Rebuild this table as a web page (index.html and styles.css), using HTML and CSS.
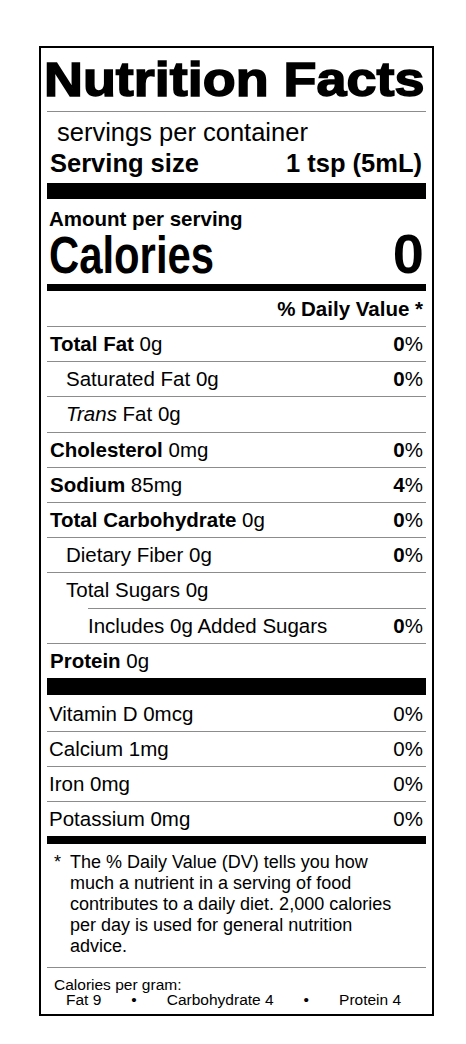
FILE: index.html
```html
<!DOCTYPE html>
<html lang="en">
<head>
<meta charset="utf-8">
<title>Nutrition Facts</title>
<link rel="stylesheet" href="styles.css">
</head>
<body>
<section class="label">
  <header class="title-block">
    <h1 class="title"><span class="title-text">Nutrition Facts</span></h1>
  </header>

  <div class="servings">
    <p class="servings-count">servings per container</p>
    <p class="serving-size"><span>Serving size</span><span>1 tsp (5mL)</span></p>
  </div>

  <div class="bar bar-thick"></div>

  <div class="calories-block">
    <p class="amount">Amount per serving</p>
    <p class="calories"><span class="cal-label">Calories</span><span class="cal-value">0</span></p>
  </div>

  <div class="bar bar-medium"></div>

  <p class="dv-head">% Daily Value *</p>

  <ul class="facts">
    <li class="row"><span><b>Total Fat</b> 0g</span><span><b>0</b>%</span></li>
    <li class="row row-sub"><span>Saturated Fat 0g</span><span><b>0</b>%</span></li>
    <li class="row row-sub"><span><i>Trans</i> Fat 0g</span></li>
    <li class="row"><span><b>Cholesterol</b> 0mg</span><span><b>0</b>%</span></li>
    <li class="row"><span><b>Sodium</b> 85mg</span><span><b>4</b>%</span></li>
    <li class="row"><span><b>Total Carbohydrate</b> 0g</span><span><b>0</b>%</span></li>
    <li class="row row-sub"><span>Dietary Fiber 0g</span><span><b>0</b>%</span></li>
    <li class="row row-sub"><span>Total Sugars 0g</span></li>
    <li class="row row-subsub"><span>Includes 0g Added Sugars</span><span><b>0</b>%</span></li>
    <li class="row"><span><b>Protein</b> 0g</span></li>
  </ul>

  <div class="bar bar-heavy"></div>

  <ul class="vitamins">
    <li class="row"><span>Vitamin D 0mcg</span><span>0%</span></li>
    <li class="row"><span>Calcium 1mg</span><span>0%</span></li>
    <li class="row"><span>Iron 0mg</span><span>0%</span></li>
    <li class="row"><span>Potassium 0mg</span><span>0%</span></li>
  </ul>

  <div class="bar bar-bottom"></div>

  <div class="footnote">
    <span class="footnote-mark">*</span>
    <p class="footnote-text">The % Daily Value (DV) tells you how<br>much a nutrient in a serving of food<br>contributes to a daily diet. 2,000 calories<br>per day is used for general nutrition<br>advice.</p>
  </div>

  <div class="per-gram">
    <p>Calories per gram:</p>
    <p class="per-gram-list"><span>Fat 9</span><span>&bull;</span><span>Carbohydrate 4</span><span>&bull;</span><span>Protein 4</span></p>
  </div>
</section>
</body>
</html>
```

FILE: styles.css
```css
* {
  box-sizing: border-box;
}

body {
  margin: 0;
  background: #fff;
  color: #000;
  font-family: "Liberation Sans", Arial, Helvetica, sans-serif;
}

p, h1, ul {
  margin: 0;
  padding: 0;
}

li {
  list-style: none;
}

.label {
  width: 395px;
  margin: 46px 0 0 39px;
  border: 2px solid #000;
  padding: 0 6px;
}

/* Title */
.title-block {
  padding: 8px 0 7px;
  border-bottom: 1px solid #8c8c8c;
}

.title {
  font-size: 47.5px;
  line-height: 48px;
  font-weight: 700;
  white-space: nowrap;
}

.title-text {
  display: inline-block;
  margin-left: -3px;
  transform: scaleX(1.135);
  transform-origin: left center;
  -webkit-text-stroke: 1.5px #000;
}

/* Servings */
.servings {
  margin-top: 5px;
  padding: 0 4px 0 3px;
  font-size: 25.5px;
  line-height: 31px;
}

.servings-count {
  padding-left: 7px;
}

.serving-size {
  display: flex;
  justify-content: space-between;
  font-weight: 700;
}

/* Bars */
.bar {
  background: #000;
}

.bar-thick {
  height: 16px;
  margin-top: 4px;
}

.bar-medium {
  height: 7px;
  margin-top: 3px;
}

.bar-heavy {
  height: 17px;
}

.bar-bottom {
  height: 8px;
}

/* Calories */
.amount {
  padding: 9px 3px 0 2px;
  font-size: 20.5px;
  line-height: 22px;
  font-weight: 700;
}

.calories {
  display: flex;
  justify-content: space-between;
  align-items: baseline;
  padding: 0 2px;
  font-weight: 700;
}

.cal-label {
  display: inline-block;
  font-size: 51px;
  line-height: 51px;
  transform: scaleX(0.82);
  transform-origin: left center;
}

.cal-value {
  font-size: 56px;
  line-height: 48px;
}

/* Daily values */
.dv-head {
  padding: 0 3px;
  text-align: right;
  font-size: 20.5px;
  line-height: 35px;
  font-weight: 700;
}

.facts {
  font-size: 20.5px;
  line-height: 34.2px;
}

.row {
  display: flex;
  justify-content: space-between;
  padding: 0 3px;
  border-top: 1px solid #8c8c8c;
}

.row-sub {
  padding-left: 19px;
}

.row-subsub {
  margin-left: 41px;
  padding-left: 0;
}

.vitamins {
  padding-top: 2px;
  font-size: 20.5px;
  line-height: 34px;
}

.vitamins .row {
  padding-left: 2px;
}

.vitamins .row:first-child {
  border-top: 0;
}

/* Footnote */
.footnote {
  display: flex;
  padding: 7.5px 0 10px;
  border-bottom: 1px solid #8c8c8c;
  font-size: 18px;
  line-height: 21px;
}

.footnote-mark {
  flex: 0 0 23px;
  padding-left: 7px;
}

.per-gram {
  padding: 9px 0 7.3px;
  font-size: 15.5px;
  line-height: 15px;
}

.per-gram p:first-child {
  padding-left: 7px;
}

.per-gram-list {
  display: flex;
  gap: 30px;
  padding-left: 19px;
}
```
